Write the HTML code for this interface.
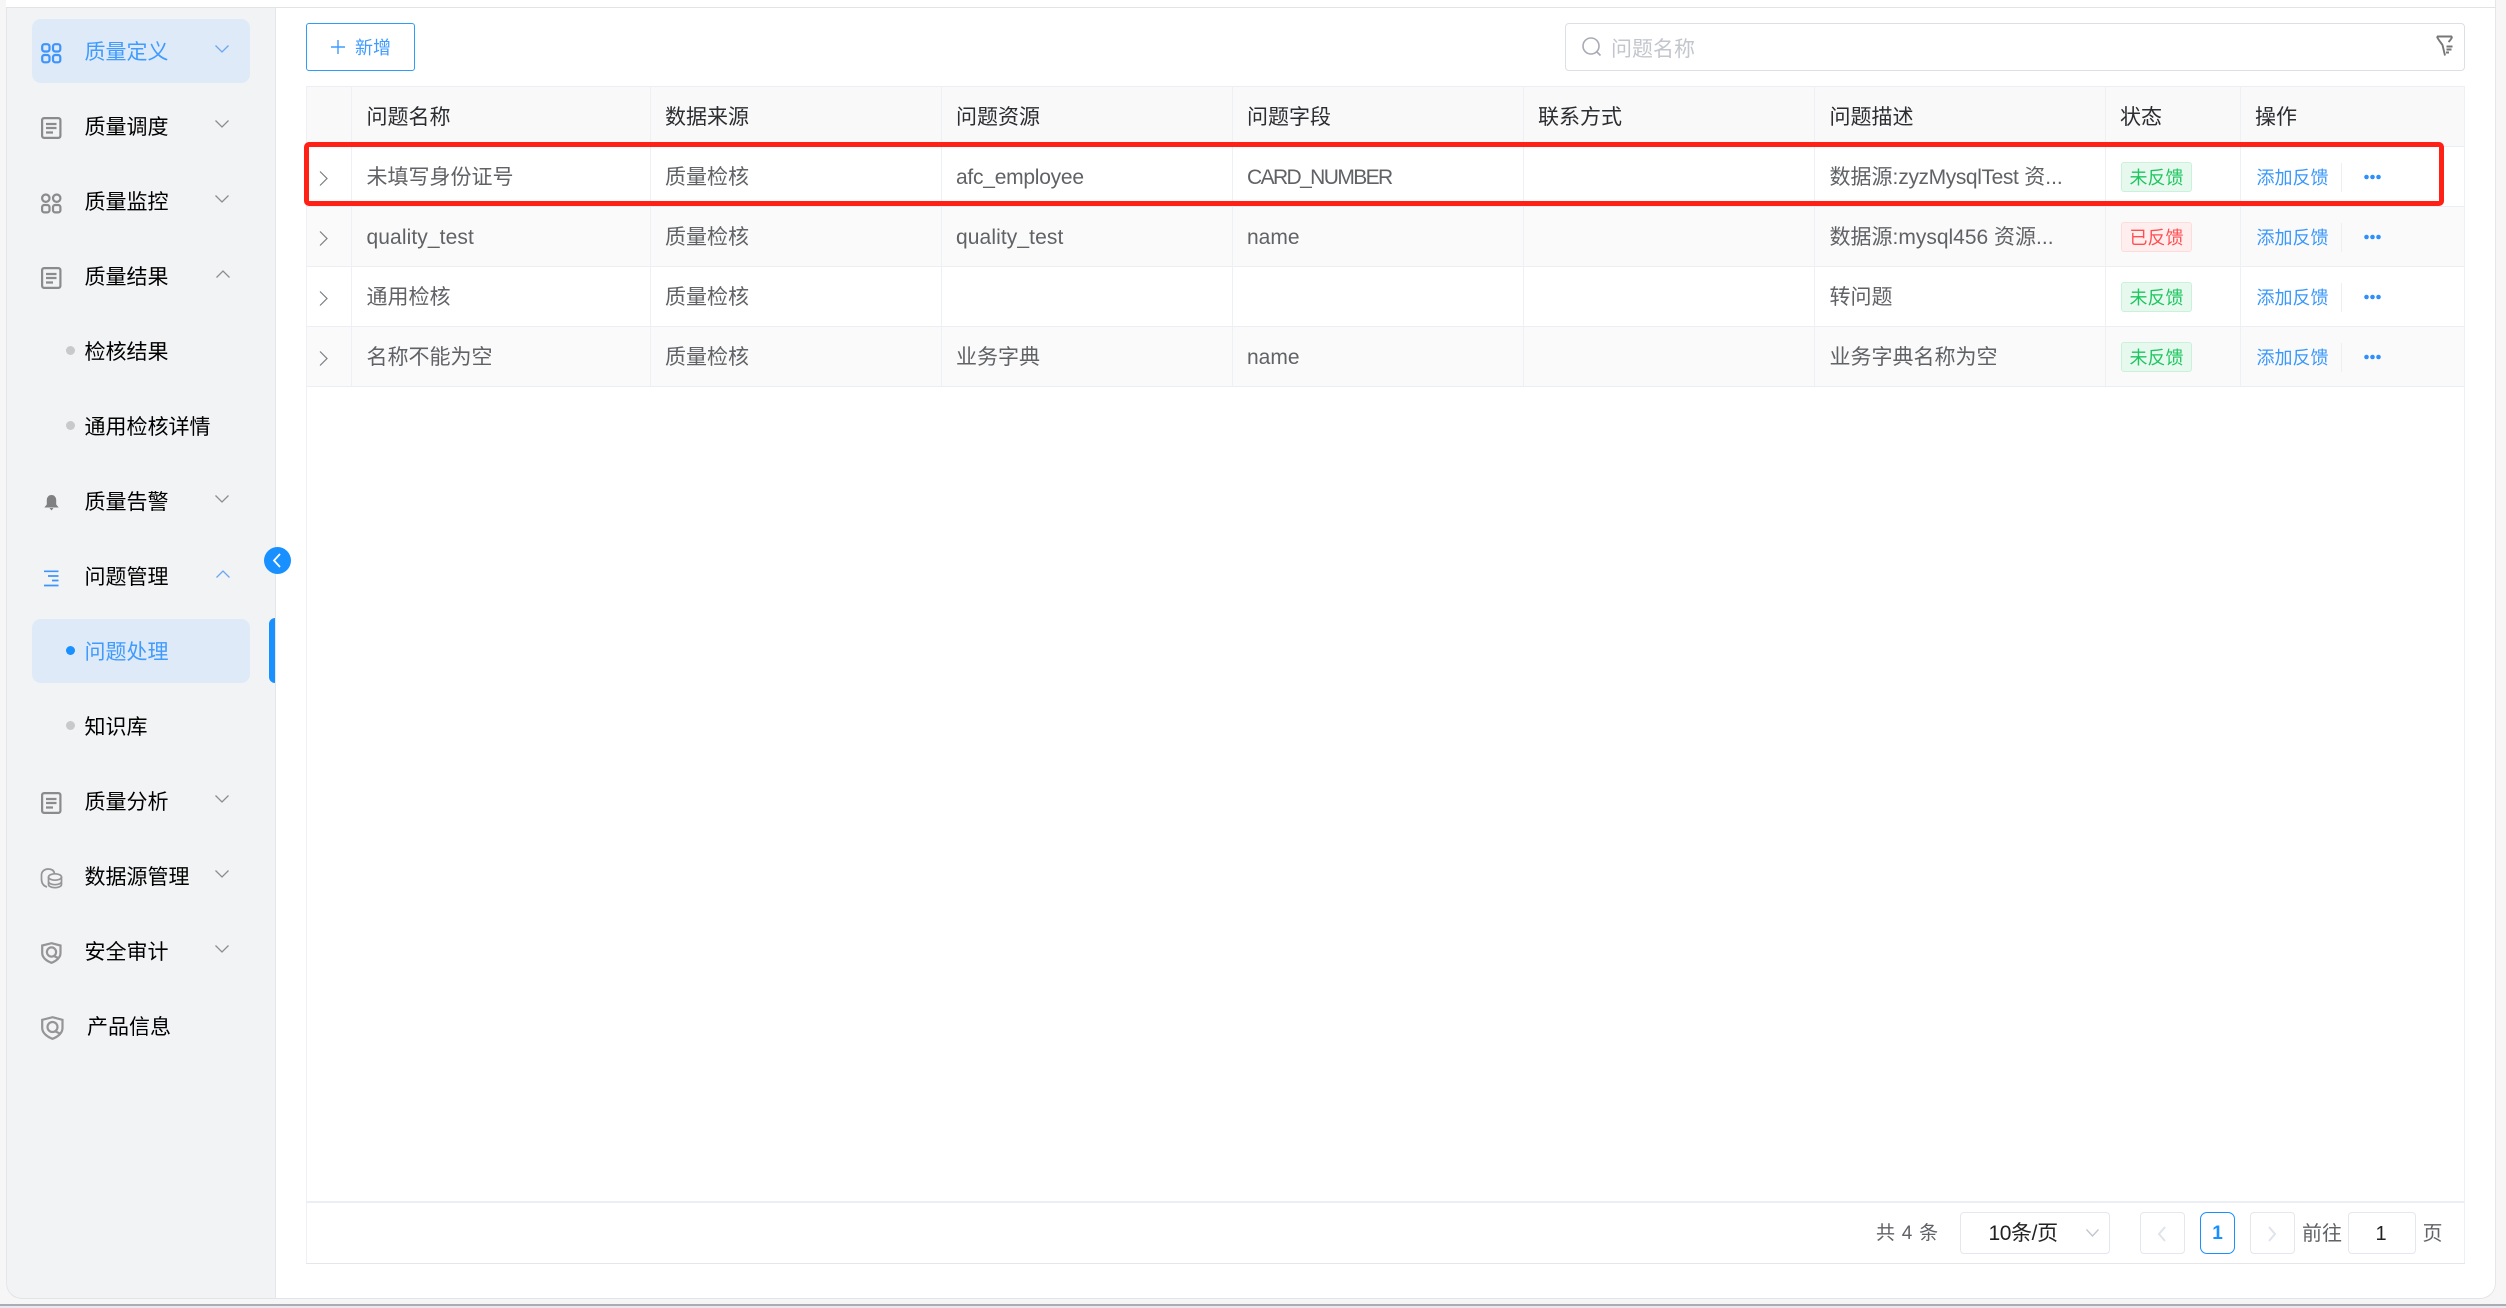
<!DOCTYPE html>
<html lang="zh"><head><meta charset="utf-8"><title>问题处理</title>
<style>
*{box-sizing:border-box;margin:0;padding:0}
html,body{width:2506px;height:1308px;overflow:hidden;background:#f6f6f7;font-family:"Liberation Sans","Noto Sans CJK SC",sans-serif;position:relative}
div,span,svg{position:absolute}
span.i{position:static}
.t{white-space:nowrap;line-height:30px;height:30px}
#lav{left:0;top:1304px;width:2506px;height:4px;background:#e9e9f2;border-top:2px solid #abacb4}
#frame{left:6px;top:0;width:2490px;height:1299px;background:#fff;border-bottom:1px solid #e2e3e6;border-right:1px solid #e6e6e8;border-radius:0 0 16px 16px;overflow:hidden}
#topline{left:6px;top:7px;width:2490px;height:1px;background:#e3e3e3}
#side{left:6px;top:8px;width:270px;height:1291px;background:#f2f3f5;border-left:1px solid #e4e6ea;border-right:1px solid #e4e6ea;border-bottom:1px solid #e2e3e6;border-radius:0 0 0 16px}
.act{left:32px;width:218px;height:64px;background:#deeaf7;border-radius:9px}
.m{left:84.500px;font-size:21px;color:#000}
.blue{color:#3f9bff}
.dot{left:65.500px;width:9px;height:9px;border-radius:50%;background:#c8c9cb}
.cell{font-size:21px;color:#606266}
.th{font-size:21px;color:#2b2d30}
.vb{width:1px;background:#eef0f6}
.hb{left:306px;width:2158px;height:1px;background:#ebeef5}
.tag{left:2121px;width:71px;height:30px;border-radius:3px;font-size:18px;line-height:30px;text-align:center;border:1px solid}
.g{background:#e7f9ef;border-color:#c9f2da;color:#1cc75f}
.r{background:#ffeeee;border-color:#ffdcdc;color:#ff4d51}
.lnk{left:2256.500px;font-size:18px;color:#3a97fb}
.div{left:2341px;width:1px;height:29px;background:#eeeff2}
.pg{top:1212px;height:42px;border:1px solid #e4e7ed;border-radius:4px;background:#fff}
</style></head><body>
<div id="lav"></div>
<div id="frame"></div>
<div id="topline"></div>
<div id="side"></div>

<!-- menu -->
<div class="act" style="top:19px"></div>
<div class="act" style="top:619px"></div>
<div style="left:269px;top:618px;width:6px;height:65px;background:#1890ff;border-radius:6px 0 0 6px"></div>
<div style="left:264px;top:547px;width:27px;height:27px;border-radius:50%;background:#1890ff"></div>
<svg style="left:264px;top:547px" width="27" height="27" fill="none" stroke="#fff" stroke-width="1.800"><path d="M16 7l-6 6.500 6 6.500"/></svg>

<div class="t m blue" style="top:38px">质量定义</div>
<div class="t m" style="top:113px">质量调度</div>
<div class="t m" style="top:188px">质量监控</div>
<div class="t m" style="top:263px">质量结果</div>
<div class="t m" style="top:338px">检核结果</div>
<div class="t m" style="top:413px">通用检核详情</div>
<div class="t m" style="top:488px">质量告警</div>
<div class="t m" style="top:563px">问题管理</div>
<div class="t m blue" style="top:638px">问题处理</div>
<div class="t m" style="top:713px">知识库</div>
<div class="t m" style="top:788px">质量分析</div>
<div class="t m" style="top:863px">数据源管理</div>
<div class="t m" style="top:938px">安全审计</div>
<div class="t m" style="left:87px;top:1013px">产品信息</div>

<div class="dot" style="top:346px"></div>
<div class="dot" style="top:421px"></div>
<div class="dot" style="top:646px;background:#1890ff"></div>
<div class="dot" style="top:721px"></div>

<!-- chevrons -->
<svg style="left:214px;top:44px" width="16" height="10" fill="none" stroke="#6ba7ef" stroke-width="1.300"><path d="M1.500 1.500L8 8l6.500-6.500"/></svg>
<svg style="left:214px;top:119px" width="16" height="10" fill="none" stroke="#8d8d8f" stroke-width="1.300"><path d="M1.500 1.500L8 8l6.500-6.500"/></svg>
<svg style="left:214px;top:194px" width="16" height="10" fill="none" stroke="#8d8d8f" stroke-width="1.300"><path d="M1.500 1.500L8 8l6.500-6.500"/></svg>
<svg style="left:215px;top:269px" width="16" height="10" fill="none" stroke="#8d8d8f" stroke-width="1.300"><path d="M1.500 8.500L8 2l6.500 6.500"/></svg>
<svg style="left:214px;top:494px" width="16" height="10" fill="none" stroke="#8d8d8f" stroke-width="1.300"><path d="M1.500 1.500L8 8l6.500-6.500"/></svg>
<svg style="left:215px;top:569px" width="16" height="10" fill="none" stroke="#6ba7ef" stroke-width="1.300"><path d="M1.500 8.500L8 2l6.500 6.500"/></svg>
<svg style="left:214px;top:794px" width="16" height="10" fill="none" stroke="#8d8d8f" stroke-width="1.300"><path d="M1.500 1.500L8 8l6.500-6.500"/></svg>
<svg style="left:214px;top:869px" width="16" height="10" fill="none" stroke="#8d8d8f" stroke-width="1.300"><path d="M1.500 1.500L8 8l6.500-6.500"/></svg>
<svg style="left:214px;top:944px" width="16" height="10" fill="none" stroke="#8d8d8f" stroke-width="1.300"><path d="M1.500 1.500L8 8l6.500-6.500"/></svg>

<!-- icons -->
<svg style="left:41px;top:43px" width="21" height="21" fill="none" stroke="#3f94fb" stroke-width="2.200"><rect x="1.200" y="1.200" width="7.300" height="7.300" rx="2.200"/><rect x="12" y="1.200" width="7.300" height="7.300" rx="2.200"/><rect x="1.200" y="12" width="7.300" height="7.300" rx="2.200"/><rect x="12" y="12" width="7.300" height="7.300" rx="2.200"/></svg>
<svg style="left:41px;top:117px" width="21" height="22" fill="none" stroke="#8b8b8d" stroke-width="2.200"><rect x="1.100" y="1.100" width="18.300" height="19.800" rx="2"/><path d="M5 7h10.500M5 11h10.500M5 15.500h7"/></svg>
<svg style="left:41px;top:193px" width="21" height="21" fill="none" stroke="#8b8b8d" stroke-width="2.200"><rect x="1.100" y="1.500" width="7.400" height="7.400" rx="3.700"/><circle cx="15.700" cy="5.200" r="3.700"/><rect x="1.100" y="12" width="7.400" height="7.400" rx="2.200"/><rect x="12" y="12" width="7.400" height="7.400" rx="2.200"/></svg>
<svg style="left:41px;top:267px" width="21" height="22" fill="none" stroke="#8b8b8d" stroke-width="2.200"><rect x="1.100" y="1.100" width="18.300" height="19.800" rx="2"/><path d="M5 7h10.500M5 11h10.500M5 15.500h7"/></svg>
<svg style="left:44px;top:494px" width="15" height="17" fill="#808082"><path d="M7.500 1C4.500 1 2.800 3.500 2.800 6v4.500L.3 13.500h14.400L12.200 10.500V6c0-2.500-1.700-5-4.700-5z"/><path d="M5.500 14h4L7.500 16.500z"/></svg>
<svg style="left:44px;top:570px" width="15" height="18" fill="none" stroke="#3f94fb" stroke-width="1.700"><path d="M0 1.300h14.500M4 6h10.500M8 10.500h6.500M0 15.500h14.500"/></svg>
<svg style="left:41px;top:792px" width="21" height="22" fill="none" stroke="#8b8b8d" stroke-width="2.200"><rect x="1.100" y="1.100" width="18.300" height="19.800" rx="2"/><path d="M5 7h10.500M5 11h10.500M5 15.500h7"/></svg>
<svg style="left:40px;top:868px" width="23" height="21" fill="none" stroke="#959597" stroke-width="1.700"><path d="M7 19C3.500 18 1.500 15 1.500 11V7C1.500 3.500 4.500 1 8 1s6 1.500 6.500 4.500"/><ellipse cx="15" cy="9" rx="6.500" ry="3.200"/><path d="M8.500 9v7.500c0 1.800 3 3.200 6.500 3.200s6.500-1.400 6.500-3.200V9M8.500 13.500c0 1.800 3 3.200 6.500 3.200s6.500-1.400 6.500-3.200"/></svg>
<svg style="left:41px;top:942px" width="21" height="22" fill="none" stroke="#959597" stroke-width="2.200"><path d="M10.500 1.200L19.500 3.500V11c0 4.500-4 8-9 9.800C5.500 19 1.200 15.500 1.200 11V3.500z"/><circle cx="10.500" cy="10" r="4.600"/><path d="M13 14l5 2.500"/></svg>
<svg style="left:41px;top:1016px" width="23" height="24" fill="none" stroke="#959597" stroke-width="2.200"><path d="M11.500 1.200L21.500 3.800V12c0 4.800-4.400 8.800-10 10.800C6 20.800 1.200 16.800 1.200 12V3.800z"/><circle cx="11.500" cy="11" r="5"/><path d="M14.500 15.500l5.500 2.500"/></svg>

<!-- toolbar -->
<div style="left:306px;top:23px;width:109px;height:48px;border:1.500px solid #2f9bfb;border-radius:3px"></div>
<svg style="left:330px;top:39px" width="16" height="16" fill="none" stroke="#3f9bff" stroke-width="1.400"><path d="M8 1v14M1 8h14"/></svg>
<div class="t" style="left:355px;top:33px;font-size:18px;color:#3f9bff">新增</div>
<div style="left:1565px;top:23px;width:900px;height:48px;border:1px solid #dcdfe6;border-radius:4px"></div>
<svg style="left:1581px;top:36px" width="22" height="22" fill="none" stroke="#a8abb2" stroke-width="1.600"><circle cx="10" cy="10" r="8"/><path d="M16 16l3.500 3.500"/></svg>
<div class="t" style="left:1611px;top:35px;font-size:21px;color:#c3c6cc">问题名称</div>
<svg style="left:2435px;top:34px" width="20" height="24" fill="none" stroke="#777" stroke-width="1.900"><path d="M2 2.500h15M2 2.500c0 1.500 4.500 7 5.500 8.500L10 21.500M17 2.500c0 1-1.500 3.500-3.500 5.500"/><path d="M11.500 12.500h6M11.500 15.500h5M11 18.500h3"/></svg>

<!-- table -->
<div style="left:306px;top:86px;width:2158px;height:60px;background:#f9f9f9"></div>
<div style="left:306px;top:206px;width:2158px;height:60px;background:#fafafa"></div>
<div style="left:306px;top:326px;width:2158px;height:60px;background:#fafafa"></div>
<div class="hb" style="top:86px"></div>
<div class="hb" style="top:146px"></div>
<div class="hb" style="top:206px"></div>
<div class="hb" style="top:266px"></div>
<div class="hb" style="top:326px"></div>
<div class="hb" style="top:386px"></div>
<div class="vb" style="left:306px;top:86px;height:1177px"></div>
<div class="vb" style="left:2464px;top:86px;height:1177px"></div>
<div class="vb" style="left:351px;top:86px;height:300px"></div>
<div class="vb" style="left:650px;top:86px;height:300px"></div>
<div class="vb" style="left:941px;top:86px;height:300px"></div>
<div class="vb" style="left:1232px;top:86px;height:300px"></div>
<div class="vb" style="left:1523px;top:86px;height:300px"></div>
<div class="vb" style="left:1814px;top:86px;height:300px"></div>
<div class="vb" style="left:2105px;top:86px;height:300px"></div>
<div class="vb" style="left:2240px;top:86px;height:300px"></div>

<div class="t th" style="left:366.500px;top:103px">问题名称</div>
<div class="t th" style="left:665px;top:103px">数据来源</div>
<div class="t th" style="left:956px;top:103px">问题资源</div>
<div class="t th" style="left:1247px;top:103px">问题字段</div>
<div class="t th" style="left:1538px;top:103px">联系方式</div>
<div class="t th" style="left:1829.500px;top:103px">问题描述</div>
<div class="t th" style="left:2120px;top:103px">状态</div>
<div class="t th" style="left:2255px;top:103px">操作</div>

<svg style="left:318px;top:170px" width="12" height="17" fill="none" stroke="#7a7c80" stroke-width="1.200"><path d="M2 1.500l7 7-7 7"/></svg>
<svg style="left:318px;top:230px" width="12" height="17" fill="none" stroke="#7a7c80" stroke-width="1.200"><path d="M2 1.500l7 7-7 7"/></svg>
<svg style="left:318px;top:290px" width="12" height="17" fill="none" stroke="#7a7c80" stroke-width="1.200"><path d="M2 1.500l7 7-7 7"/></svg>
<svg style="left:318px;top:350px" width="12" height="17" fill="none" stroke="#7a7c80" stroke-width="1.200"><path d="M2 1.500l7 7-7 7"/></svg>

<div class="t cell" style="left:366.500px;top:163px">未填写身份证号</div>
<div class="t cell" style="left:665px;top:163px">质量检核</div>
<div class="t cell" style="left:956px;top:163px;letter-spacing:-.25px">afc_employee</div>
<div class="t cell" style="left:1247px;top:163px;letter-spacing:-1.600px">CARD_NUMBER</div>
<div class="t cell" style="left:1829.500px;top:163px">数据源:<span class="i" style="letter-spacing:-.4px">zyzMysqlTest</span> 资...</div>

<div class="t cell" style="left:366.500px;top:223px;letter-spacing:.1px">quality_test</div>
<div class="t cell" style="left:665px;top:223px">质量检核</div>
<div class="t cell" style="left:956px;top:223px;letter-spacing:.1px">quality_test</div>
<div class="t cell" style="left:1247px;top:223px">name</div>
<div class="t cell" style="left:1829.500px;top:223px">数据源:mysql456 资源...</div>

<div class="t cell" style="left:366.500px;top:283px">通用检核</div>
<div class="t cell" style="left:665px;top:283px">质量检核</div>
<div class="t cell" style="left:1829.500px;top:283px">转问题</div>

<div class="t cell" style="left:366.500px;top:343px">名称不能为空</div>
<div class="t cell" style="left:665px;top:343px">质量检核</div>
<div class="t cell" style="left:956px;top:343px">业务字典</div>
<div class="t cell" style="left:1247px;top:343px">name</div>
<div class="t cell" style="left:1829.500px;top:343px">业务字典名称为空</div>

<div class="tag g" style="top:162px">未反馈</div>
<div class="tag r" style="top:222px">已反馈</div>
<div class="tag g" style="top:282px">未反馈</div>
<div class="tag g" style="top:342px">未反馈</div>

<div class="t lnk" style="top:163px">添加反馈</div>
<div class="t lnk" style="top:223px">添加反馈</div>
<div class="t lnk" style="top:283px">添加反馈</div>
<div class="t lnk" style="top:343px">添加反馈</div>
<div class="div" style="top:163px"></div>
<div class="div" style="top:223px"></div>
<div class="div" style="top:283px"></div>
<div class="div" style="top:343px"></div>
<svg style="left:2364px;top:174px" width="17" height="6" fill="#2f8ffb"><circle cx="2.500" cy="3" r="2.300"/><circle cx="8.500" cy="3" r="2.300"/><circle cx="14.500" cy="3" r="2.300"/></svg>
<svg style="left:2364px;top:234px" width="17" height="6" fill="#2f8ffb"><circle cx="2.500" cy="3" r="2.300"/><circle cx="8.500" cy="3" r="2.300"/><circle cx="14.500" cy="3" r="2.300"/></svg>
<svg style="left:2364px;top:294px" width="17" height="6" fill="#2f8ffb"><circle cx="2.500" cy="3" r="2.300"/><circle cx="8.500" cy="3" r="2.300"/><circle cx="14.500" cy="3" r="2.300"/></svg>
<svg style="left:2364px;top:354px" width="17" height="6" fill="#2f8ffb"><circle cx="2.500" cy="3" r="2.300"/><circle cx="8.500" cy="3" r="2.300"/><circle cx="14.500" cy="3" r="2.300"/></svg>

<!-- red box -->
<div style="left:304px;top:142px;width:2140px;height:64px;border:5px solid #ff2016;border-radius:5px"></div>

<!-- footer -->
<div style="left:306px;top:1201px;width:2158px;height:2px;background:#ebeef5"></div>
<div style="left:306px;top:1263px;width:2159px;height:1px;background:#e4e6ea"></div>
<div class="t" style="left:1876px;top:1219px;font-size:19px;color:#606266;word-spacing:1.500px">共 4 条</div>
<div class="pg" style="left:1960px;width:150px"></div>
<div class="t" style="left:1988.500px;top:1219px;font-size:21px;color:#222;letter-spacing:-.4px">10条/页</div>
<svg style="left:2085px;top:1228px" width="15" height="10" fill="none" stroke="#c0c4cc" stroke-width="1.300"><path d="M1.500 1.500L7.500 8l6-6.500"/></svg>
<div class="pg" style="left:2140px;width:45px"></div>
<svg style="left:2156px;top:1225px" width="12" height="18" fill="none" stroke="#dfe3ea" stroke-width="2"><path d="M9 2L3 9l6 7"/></svg>
<div class="pg" style="left:2200px;width:35px;border:1px solid #1890ff;border-radius:7px"></div>
<div class="t" style="left:2200px;width:35px;top:1219px;text-align:center;font-size:19px;font-weight:bold;color:#1890ff">1</div>
<div class="pg" style="left:2250px;width:45px"></div>
<svg style="left:2266px;top:1225px" width="12" height="18" fill="none" stroke="#dfe3ea" stroke-width="2"><path d="M3 2l6 7-6 7"/></svg>
<div class="t" style="left:2302px;top:1219px;font-size:20px;color:#606266">前往</div>
<div class="pg" style="left:2348px;width:68px"></div>
<div class="t" style="left:2347px;width:68px;top:1219px;text-align:center;font-size:20px;color:#222">1</div>
<div class="t" style="left:2422.500px;top:1219px;font-size:20px;color:#606266">页</div>
</body></html>
